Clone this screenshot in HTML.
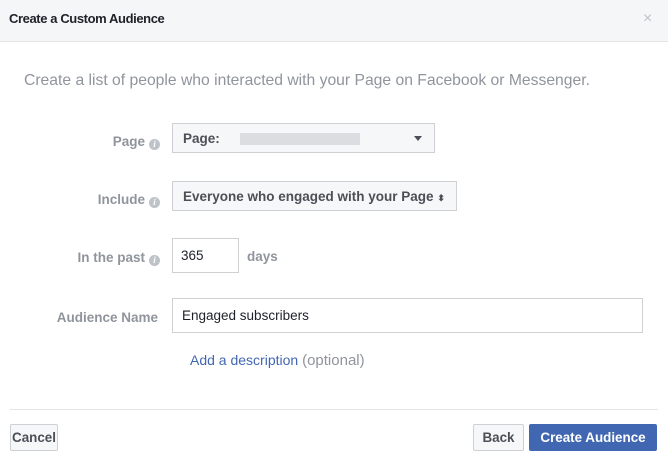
<!DOCTYPE html>
<html><head><style>
*{box-sizing:border-box;margin:0;padding:0}
body{width:668px;height:461px;background:#fff;font-family:"Liberation Sans",Arial,sans-serif;position:relative;overflow:hidden}
.a{position:absolute}
.hdr{left:0;top:0;width:668px;height:42px;background:#f5f6f7;border-bottom:1px solid #e5e5e5}
.lbl{color:#90949c;font-size:13.5px;font-weight:bold;text-align:right;width:160px;left:0}
.i{display:inline-block;width:11px;height:11px;border-radius:50%;background:#bec2c9;color:#fff;font-size:9px;line-height:11px;text-align:center;margin-left:4px;vertical-align:-1px;font-family:"Liberation Serif",serif;font-style:italic}
.box{border:1px solid #ced0d4;background:#fff;font-size:13.5px;color:#1d2129}
.sel{background:#f6f7f9;font-weight:bold;color:#4b4f56}
.btn{border:1px solid #ced0d4;background:#f6f7f9;font-size:13.4px;font-weight:bold;color:#4b4f56;text-align:center;line-height:25px;border-radius:2px}
</style></head><body>
<div class="a hdr"></div>
<div class="a" style="left:9px;top:11px;font-size:13px;font-weight:bold;color:#1d2129;letter-spacing:-0.4px">Create a Custom Audience</div>
<div class="a" style="left:643px;top:10px;font-size:16px;color:#bec2c9">×</div>
<div class="a" style="left:24px;top:72px;font-size:15.7px;color:#90949c">Create a list of people who interacted with your Page on Facebook or Messenger.</div>

<div class="a lbl" style="top:134px">Page<span class="i">i</span></div>
<div class="a box sel" style="left:172px;top:123px;width:263px;height:30px;padding:7px 10px">Page:
<span style="display:inline-block;width:120px;height:12px;background:#dcdde0;vertical-align:-2px;margin-left:16px"></span>
<span style="position:absolute;right:12px;top:12px;border-left:4px solid transparent;border-right:4px solid transparent;border-top:5px solid #4b4f56"></span></div>

<div class="a lbl" style="top:192px">Include<span class="i">i</span></div>
<div class="a box sel" style="left:172px;top:181px;width:285px;height:30px;padding:7px 10px;white-space:nowrap">Everyone who engaged with your Page <span style="font-size:9px">⬍</span></div>

<div class="a lbl" style="top:250px">In the past<span class="i">i</span></div>
<div class="a box" style="left:172px;top:238px;width:67px;height:35px;padding:9px 8px">365</div>
<div class="a" style="left:247px;top:249px;font-size:13.5px;font-weight:bold;color:#90949c">days</div>

<div class="a lbl" style="top:310px;width:158px">Audience Name</div>
<div class="a box" style="left:172px;top:298px;width:471px;height:35px;padding:9px 9px">Engaged subscribers</div>

<div class="a" style="left:190px;top:352px;font-size:14px;color:#4267b2">Add a description <span style="color:#90949c;font-size:15px">(optional)</span></div>

<div class="a" style="left:10px;top:409px;width:648px;height:1px;background:#e5e5e5"></div>
<div class="a btn" style="left:10px;top:424px;width:48px;height:27px">Cancel</div>
<div class="a btn" style="left:473px;top:424px;width:51px;height:27px">Back</div>
<div class="a btn" style="left:529px;top:424px;width:128px;height:27px;background:#4267b2;border-color:#4267b2;color:#fff">Create Audience</div>
</body></html>
